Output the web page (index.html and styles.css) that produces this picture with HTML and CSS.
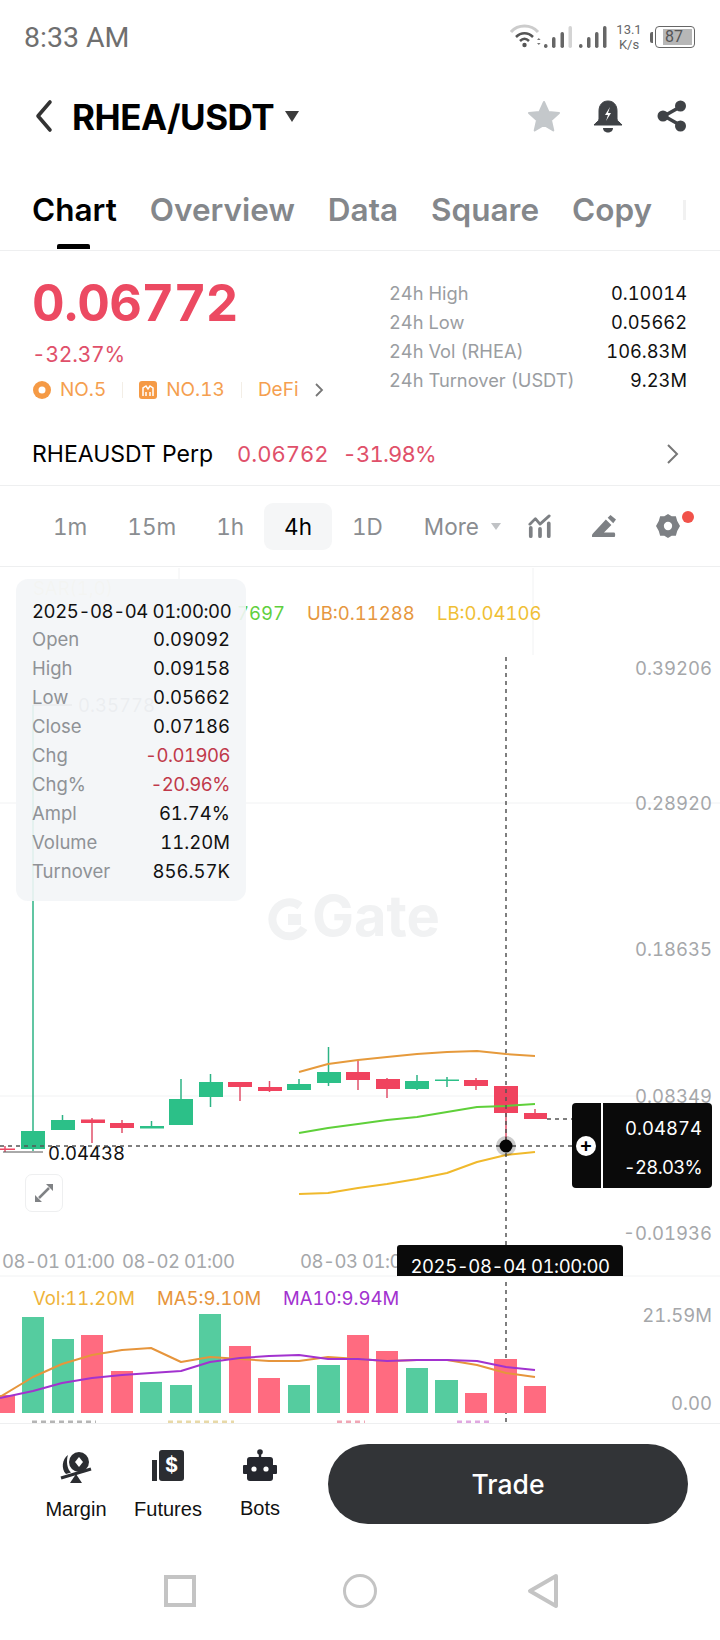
FILE: index.html
```html
<!DOCTYPE html>
<html lang="en">
<head>
<meta charset="utf-8">
<title>RHEA/USDT</title>
<link rel="stylesheet" href="styles.css">
</head>
<body>
<div class="app">
  <div class="status">
    <span class="time">8:33 AM</span>
    <div class="status-right">
      <svg class="sig" width="104" height="26" viewBox="0 0 104 26">
        <path d="M1 8C8 0 21 0 28 8" class="wf1"/>
        <path d="M6 13C11 8 18 8 23 13" class="wf2"/>
        <path d="M10 17C13 14 16 14 19 17" class="wf2"/>
        <circle cx="14.500" cy="21" r="2.200" fill="#555"/>
        <path d="M27 16l1.800-2 1.800 2zM27 19l1.800 2 1.800-2z" fill="#777"/>
        <rect x="34" y="20" width="3.500" height="4" rx="1.700" fill="#666"/>
        <rect x="42" y="13" width="3.500" height="11" rx="1.700" fill="#666"/>
        <rect x="50.500" y="8" width="3.500" height="16" rx="1.700" fill="#666"/>
        <rect x="58.500" y="2" width="3.500" height="22" rx="1.700" fill="#d4d4d4"/>
        <rect x="69" y="20" width="3.500" height="4" rx="1.700" fill="#666"/>
        <rect x="77" y="13" width="3.500" height="11" rx="1.700" fill="#666"/>
        <rect x="85" y="8" width="3.500" height="16" rx="1.700" fill="#666"/>
        <rect x="93" y="2" width="3.500" height="22" rx="1.700" fill="#666"/>
      </svg>
      <div class="speed"><span>13.1</span><span>K/s</span></div>
      <div class="battery"><span class="nub"></span><div class="cell"><span class="level">87</span></div></div>
    </div>
  </div>

  <div class="head">
    <svg class="back" width="18" height="34" viewBox="0 0 18 34"><path d="M15 3L3 17l12 14" fill="none" stroke="#333" stroke-width="3.600" stroke-linecap="round" stroke-linejoin="round"/></svg>
    <span class="title">RHEA/USDT</span>
    <span class="caret"></span>
    <div class="head-icons">
      <svg class="star" width="36" height="34" viewBox="0 0 36 34"><path d="M18 3l4.500 10 10.500 1-8 7.200 2.300 10.300L18 26l-9.300 5.500L11 21.200 3 14l10.500-1z" fill="#c4c8cb" stroke="#c4c8cb" stroke-width="2" stroke-linejoin="round"/></svg>
      <svg width="32" height="34" viewBox="0 0 32 34"><path d="M16 2c-6 0-9 4.500-9 10v8c0 2-3 3.500-5 6h28c-2-2.500-5-4-5-6v-8c0-5.500-3-10-9-10z" fill="#3f4246" stroke="#3f4246" stroke-linejoin="round"/><path d="M11 29h10c0 6-10 6-10 0z" fill="#3f4246"/><path d="M18 8l-5 8h3l-2 6 5-8h-3z" fill="#fff"/></svg>
      <svg width="32" height="34" viewBox="0 0 32 34"><path d="M24 8L8 17l16 9" fill="none" stroke="#3f4246" stroke-width="3.500"/><circle cx="24.500" cy="7" r="5.500" fill="#3f4246"/><circle cx="7" cy="17" r="5.500" fill="#3f4246"/><circle cx="24.500" cy="27" r="5.500" fill="#3f4246"/></svg>
    </div>
  </div>

  <div class="tabs">
    <span class="tab on">Chart</span>
    <span class="tab">Overview</span>
    <span class="tab">Data</span>
    <span class="tab">Square</span>
    <span class="tab">Copy</span>
    <span class="tab-fade"></span>
  </div>

  <div class="stats">
    <div class="stats-left">
      <div class="price">0.06772</div>
      <div class="pct">-32.37%</div>
      <div class="tags">
        <svg width="18" height="18" viewBox="0 0 18 18"><circle cx="9" cy="9" r="9" fill="#f59a45"/><circle cx="9" cy="9" r="3.500" fill="#fff"/></svg>
        <span class="tag t1">NO.5</span>
        <i class="sep"></i>
        <svg width="18" height="18" viewBox="0 0 18 18"><rect width="18" height="18" rx="3" fill="#f59a45"/><path d="M4 15V7l3-2 2 3 2-3 3 2v8M7 15v-4M11 15v-4" fill="none" stroke="#fff" stroke-width="1.500"/></svg>
        <span class="tag t2">NO.13</span>
        <i class="sep"></i>
        <span class="tag t3">DeFi</span>
        <svg class="tag-chev" width="10" height="16" viewBox="0 0 10 16"><path d="M2 2l6 6-6 6" fill="none" stroke="#777" stroke-width="1.800"/></svg>
      </div>
    </div>
    <div class="stats-right">
      <div class="srow"><span>24h High</span><b>0.10014</b></div>
      <div class="srow"><span>24h Low</span><b>0.05662</b></div>
      <div class="srow"><span>24h Vol (RHEA)</span><b>106.83M</b></div>
      <div class="srow"><span>24h Turnover (USDT)</span><b>9.23M</b></div>
    </div>
  </div>

  <div class="perp">
    <span class="perp-name">RHEAUSDT Perp</span>
    <span class="perp-price">0.06762</span>
    <span class="perp-pct">-31.98%</span>
    <svg class="perp-chev" width="14" height="22" viewBox="0 0 14 22"><path d="M2 2l9 9-9 9" fill="none" stroke="#777" stroke-width="2"/></svg>
  </div>

  <div class="frames">
    <span class="fr">1m</span>
    <span class="fr">15m</span>
    <span class="fr">1h</span>
    <span class="fr on">4h</span>
    <span class="fr">1D</span>
    <span class="fr more">More</span>
    <span class="more-caret"></span>
    <div class="fr-icons">
      <svg width="24" height="24" viewBox="0 0 26 26"><path d="M2 11l6-6 5 6 10-9" fill="none" stroke="#7d8084" stroke-width="3" stroke-linejoin="round" stroke-linecap="round"/><path d="M3 15v9M13 16v8M22.500 10v14" stroke="#7d8084" stroke-width="4" stroke-linecap="round"/></svg>
      <svg width="24" height="24" viewBox="0 0 26 26"><path d="M0 24c0-1 0-2 1-3L15 6l6 6-8 8h11c1.500 0 1.500 5 0 5H1c-1 0-1-.5-1-1zM17 4l3-3 6 5-3 4z" fill="#7d8084"/></svg>
      <div class="gear">
        <svg width="24" height="24" viewBox="0 0 26 26"><path d="M13 0l4 2.500 4.500 0 1.500 5 3 5.500-3 5.500-1.500 5-4.500 0-4 2.500-4-2.500-4.500 0-1.500-5-3-5.500 3-5.500 1.500-5 4.500 0z" fill="#7d8084"/><circle cx="13" cy="13" r="4.500" fill="#fff"/></svg>
        <span class="dot"></span>
      </div>
    </div>
  </div>

  <div class="chart">
    <svg class="plot" width="720" height="857" viewBox="0 567 720 857">
      <g class="grid">
        <line x1="0" y1="803" x2="720" y2="803"/>
        <line x1="0" y1="1096" x2="636" y2="1096"/>
        <line x1="533" y1="568" x2="533" y2="655"/>
        <line x1="179" y1="568" x2="179" y2="592"/>
        <line x1="0" y1="1276" x2="720" y2="1276"/>
      </g>

      <g class="wm">
        <path d="M300 906a17 17 0 1 0 4 22" fill="none" stroke="#f1f2f3" stroke-width="8"/>
        <rect x="288" y="914" width="13" height="11" fill="#f1f2f3"/>
        <text x="312" y="936">Gate</text>
      </g>

      <text class="lg sar" x="33" y="595">SAR(1,0)</text>
      <text class="lg" x="285" y="620" text-anchor="end" fill="#5fcf3d">7697</text>
      <text class="lg" x="307" y="620" fill="#e6973e">UB:0.11288</text>
      <text class="lg" x="437" y="620" fill="#f0bf35">LB:0.04106</text>

      <g class="ax">
        <text x="712" y="675">0.39206</text>
        <text x="712" y="810">0.28920</text>
        <text x="712" y="956">0.18635</text>
        <text x="712" y="1103">0.08349</text>
        <text x="712" y="1240">-0.01936</text>
      </g>

      <text class="ax-x" x="2" y="1268">08-01 01:00</text>
      <text class="ax-x" x="122" y="1268">08-02 01:00</text>
      <text class="ax-x" x="300" y="1268">08-03 01:00</text>

      <text class="lbl" x="78" y="712" fill="#a5a7aa">0.35778</text>
      <line x1="33" y1="705" x2="72" y2="705" stroke="#555" stroke-width="1"/>

      <g class="cg">
        <line x1="33" y1="705" x2="33" y2="1151"/><rect x="21" y="1131" width="24" height="18"/>
        <line x1="62.500" y1="1115" x2="62.500" y2="1120"/><rect x="51" y="1120" width="24" height="10"/>
        <line x1="151.500" y1="1121" x2="151.500" y2="1126"/><rect x="140" y="1126" width="24" height="2.500"/>
        <line x1="181" y1="1079" x2="181" y2="1125"/><rect x="169" y="1099" width="24" height="26"/>
        <line x1="210.500" y1="1074" x2="210.500" y2="1107"/><rect x="199" y="1082" width="24" height="15"/>
        <line x1="299" y1="1079" x2="299" y2="1084"/><rect x="287" y="1084" width="24" height="6"/>
        <line x1="328.500" y1="1047" x2="328.500" y2="1086"/><rect x="317" y="1072" width="24" height="11"/>
        <line x1="417" y1="1075" x2="417" y2="1090"/><rect x="405" y="1081" width="24" height="8"/>
        <line x1="447" y1="1077" x2="447" y2="1087"/><rect x="435" y="1079.500" width="24" height="1.500"/>
      </g>
      <g class="cr">
        <rect x="0" y="1148.500" width="15" height="1.500"/><line x1="5" y1="1146" x2="5" y2="1152"/>
        <line x1="92" y1="1118" x2="92" y2="1143"/><rect x="81" y="1119.500" width="24" height="3.500"/>
        <line x1="122" y1="1120" x2="122" y2="1133"/><rect x="110" y="1123" width="24" height="5"/>
        <line x1="240" y1="1082" x2="240" y2="1101"/><rect x="228" y="1082" width="24" height="5"/>
        <line x1="269.500" y1="1081" x2="269.500" y2="1092"/><rect x="258" y="1087" width="24" height="4"/>
        <line x1="358" y1="1060" x2="358" y2="1090"/><rect x="346" y="1072" width="24" height="8"/>
        <line x1="387" y1="1078" x2="387" y2="1098"/><rect x="376" y="1079" width="24" height="10"/>
        <line x1="476" y1="1078" x2="476" y2="1090"/><rect x="464" y="1080" width="24" height="6"/>
        <line x1="506" y1="1086" x2="506" y2="1150"/><rect x="494" y="1086" width="24" height="27"/>
        <line x1="535" y1="1109" x2="535" y2="1119"/><rect x="524" y="1113" width="23" height="6"/>
      </g>

      <polyline class="band" stroke="#e69a3c" points="299,1072 328,1064 358,1060 387,1057 417,1054 447,1052 477,1051 506,1054 535,1056"/>
      <polyline class="band" stroke="#5fd03a" points="299,1133 328,1128 358,1124 387,1120 417,1117 447,1112 477,1107 506,1106 535,1104"/>
      <polyline class="band" stroke="#f0b92c" points="299,1194 328,1193 358,1188 387,1184 417,1179 447,1173 477,1162 506,1155 535,1152"/>

      <line x1="3" y1="1152" x2="43" y2="1152" stroke="#555" stroke-width="1"/>
      <text class="lbl dark" x="48" y="1160">0.04438</text>

      <line class="dash" x1="0" y1="1146" x2="572" y2="1146"/>
      <line class="dash" x1="547" y1="1119" x2="572" y2="1119"/>
      <line class="dash" x1="506" y1="657" x2="506" y2="1245"/>
      <line class="dash" x1="506" y1="1282" x2="506" y2="1424"/>
      <circle cx="506" cy="1146" r="10" fill="#000" fill-opacity=".2"/>
      <circle cx="506" cy="1146" r="6.500" fill="#050505"/>

      <text class="lg" x="33" y="1305" fill="#eeb33a">Vol:11.20M</text>
      <text class="lg" x="157" y="1305" fill="#e6953c">MA5:9.10M</text>
      <text class="lg" x="283" y="1305" fill="#a232cf">MA10:9.94M</text>
      <g class="ax">
        <text x="712" y="1322">21.59M</text>
        <text x="712" y="1410">0.00</text>
      </g>

      <g fill="#55cc9f">
        <rect x="22" y="1317" width="22" height="96"/>
        <rect x="52" y="1339" width="22" height="74"/>
        <rect x="140" y="1382" width="22" height="31"/>
        <rect x="170" y="1385" width="22" height="28"/>
        <rect x="199" y="1314" width="22" height="99"/>
        <rect x="288" y="1385" width="22" height="28"/>
        <rect x="317" y="1365" width="23" height="48"/>
        <rect x="406" y="1368" width="22" height="45"/>
        <rect x="435" y="1380" width="23" height="33"/>
      </g>
      <g fill="#ff6b80">
        <rect x="0" y="1395" width="15" height="18"/>
        <rect x="81" y="1335" width="22" height="78"/>
        <rect x="111" y="1371" width="22" height="42"/>
        <rect x="229" y="1346" width="22" height="67"/>
        <rect x="258" y="1378" width="22" height="35"/>
        <rect x="347" y="1335" width="22" height="78"/>
        <rect x="376" y="1351" width="22" height="62"/>
        <rect x="465" y="1393" width="22" height="20"/>
        <rect x="494" y="1359" width="23" height="54"/>
        <rect x="524" y="1386" width="22" height="27"/>
      </g>
      <polyline class="band" stroke="#e6953c" points="0,1397 33,1377 62,1364 92,1355 122,1350 151,1348 181,1362 210,1357 240,1359 269,1361 299,1361 328,1357 358,1359 387,1361 417,1360 447,1360 477,1365 506,1373 535,1377"/>
      <polyline class="band" stroke="#a232cf" points="0,1398 33,1391 62,1383 92,1378 122,1375 151,1373 181,1371 210,1362 240,1358 269,1356 299,1355 328,1359 358,1359 387,1361 417,1360 447,1360 477,1361 506,1367 535,1370"/>

      <g class="frag">
        <line x1="32" y1="1422" x2="96" y2="1422" stroke="#b5b5b5"/>
        <line x1="168" y1="1422" x2="234" y2="1422" stroke="#e8d9a8"/>
        <line x1="337" y1="1422" x2="365" y2="1422" stroke="#f0a6b5"/>
        <line x1="457" y1="1422" x2="490" y2="1422" stroke="#e0a8e0"/>
      </g>
    </svg>

    <div class="tip">
      <div class="tip-date">2025-08-04 01:00:00</div>
      <div class="trow"><span>Open</span><b>0.09092</b></div>
      <div class="trow"><span>High</span><b>0.09158</b></div>
      <div class="trow"><span>Low</span><b>0.05662</b></div>
      <div class="trow"><span>Close</span><b>0.07186</b></div>
      <div class="trow"><span>Chg</span><b class="neg">-0.01906</b></div>
      <div class="trow"><span>Chg%</span><b class="neg">-20.96%</b></div>
      <div class="trow"><span>Ampl</span><b>61.74%</b></div>
      <div class="trow"><span>Volume</span><b>11.20M</b></div>
      <div class="trow"><span>Turnover</span><b>856.57K</b></div>
    </div>

    <div class="expand">
      <svg width="20" height="20" viewBox="0 0 20 20"><path d="M12 1h7v7zM1 12v7h7z" fill="#808285"/><path d="M15 5L5 15" stroke="#808285" stroke-width="2.500"/></svg>
    </div>

    <div class="plabel">
      <div class="plus-cell"><span class="plus">+</span></div>
      <div class="pvals"><span>0.04874</span><span class="pneg">-28.03%</span></div>
    </div>

    <div class="dlabel">2025-08-04 01:00:00</div>
  </div>

  <div class="bar">
    <div class="bar-item">
      <svg width="36" height="36" viewBox="0 0 36 36"><path d="M10 6c-6 4-7 14-2 19l5-1.500C9 20 8 12 10 6z" fill="#2b2d31"/><circle cx="21" cy="13" r="10" fill="#2b2d31"/><path d="M21 8l4 5-4 5-4-5z" fill="#fff"/><path d="M3 29l30-9" stroke="#2b2d31" stroke-width="3"/><path d="M18 25l6 9H12z" fill="#2b2d31"/></svg>
      <span>Margin</span>
    </div>
    <div class="bar-item">
      <svg width="36" height="36" viewBox="0 0 36 36"><rect x="2" y="11" width="5" height="21" fill="#2b2d31"/><rect x="9" y="1" width="25" height="31" rx="3" fill="#2b2d31"/><text class="dollar" x="21.500" y="23">$</text></svg>
      <span>Futures</span>
    </div>
    <div class="bar-item bots">
      <svg width="36" height="36" viewBox="0 0 36 36"><circle cx="18" cy="3" r="2.800" fill="#25272e"/><rect x="16.800" y="3" width="2.400" height="6" fill="#25272e"/><rect x="5" y="8" width="26" height="24" rx="3" fill="#25272e"/><rect x="1" y="16" width="5" height="9" rx="1" fill="#25272e"/><rect x="30" y="16" width="5" height="9" rx="1" fill="#25272e"/><circle cx="12" cy="20" r="2.600" fill="#fff"/><circle cx="24" cy="20" r="2.600" fill="#fff"/></svg>
      <span>Bots</span>
    </div>
    <div class="trade">Trade</div>
  </div>

  <div class="nav">
    <span class="n-square"></span>
    <span class="n-circle"></span>
    <svg width="32" height="36" viewBox="0 0 32 36"><path d="M29 3L3 18l26 15z" fill="none" stroke="#c4c4c4" stroke-width="4" stroke-linejoin="round"/></svg>
  </div>
</div>
</body>
</html>
```
FILE: styles.css
```css
* { box-sizing: border-box; }
html, body { margin: 0; padding: 0; background: #fff; }
body { font-family: Inter, "Liberation Sans", sans-serif; color: #000; font-variant-numeric: tabular-nums; }
.app { width: 720px; height: 1640px; overflow: hidden; display: flex; flex-direction: column; }

.status { height: 74px; flex: none; display: flex; align-items: center; justify-content: space-between; padding: 0 25px 0 24px; }
.time { font-family: Roboto, sans-serif; font-size: 28.500px; color: #6f6f6f; }
.status-right { display: flex; align-items: center; }
.sig { margin-right: 3px; }
.wf1 { fill: none; stroke: #ccc; stroke-width: 3; }
.wf2 { fill: none; stroke: #555; stroke-width: 2.500; }
.speed { display: flex; flex-direction: column; align-items: center; font-family: Roboto, sans-serif; font-size: 13px; line-height: 15px; color: #666; width: 24px; margin-right: 9px; }
.battery { display: flex; align-items: center; gap: 2px; }
.nub { width: 3px; height: 11px; background: #666; border-radius: 2px 0 0 2px; }
.cell { width: 40px; height: 22px; border: 1.500px solid #666; border-radius: 4px; padding: 2px 2.500px 2px 7px; display: flex; }
.level { flex: 1; background: #b7b7b7; font-family: Roboto, sans-serif; font-size: 16px; line-height: 15px; color: #555; padding-left: 2px; }

.head { height: 84px; flex: none; display: flex; align-items: center; padding: 0 32px 0 35px; }
.back { flex: none; }
.title { font-size: 35px; font-weight: 700; margin-left: 19px; letter-spacing: -.5px; line-height: 40px; margin-top: 2px; }
.caret { width: 0; height: 0; border-left: 7.500px solid transparent; border-right: 7.500px solid transparent; border-top: 11px solid #3c3c3c; margin-left: 11px; }
.head-icons { margin-left: auto; display: flex; align-items: center; gap: 32px; }
.star { margin-right: -2px; }

.tabs { height: 93px; flex: none; border-bottom: 1px solid #eeeff0; display: flex; gap: 33px; padding: 0 0 0 32px; position: relative; align-items: flex-start; }
.tab { font-size: 31.500px; font-weight: 600; color: #84878b; line-height: 40px; margin-top: 32px; }
.tab.on { color: #000; position: relative; }
.tab.on::after { content: ""; position: absolute; left: 25px; width: 33px; top: 54px; height: 5px; background: #000; border-radius: 2px 2px 0 0; }
.tab-fade { width: 3px; height: 20px; background: #f1f1f1; position: absolute; left: 683px; top: 42px; }

.stats { height: 172px; flex: none; display: flex; padding: 0 33px 0 32px; }
.stats-left { width: 357px; flex: none; padding-top: 26px; }
.price { font-size: 50.500px; font-weight: 700; color: #ec4a62; line-height: 52px; letter-spacing: -.5px; }
.pct { font-size: 21px; color: #e0506a; line-height: 26px; margin-top: 13px; letter-spacing: -.2px; }
.tags { display: flex; align-items: center; height: 24px; margin-top: 10px; font-size: 19px; color: #f59f50; padding-left: 1px; }
.tag { line-height: 24px; }
.t1 { margin-left: 9px; }
.t2 { margin-left: 9px; }
.sep { width: 1px; height: 16px; background: #f3eee6; margin: 0 16px; }
.tag-chev { margin-left: 16px; }
.stats-right { flex: 1; padding-top: 28px; }
.srow { display: flex; justify-content: space-between; font-size: 18.300px; line-height: 29px; height: 29px; }
.srow span { color: #9a9da1; }
.srow b { font-weight: 400; color: #111; }

.perp { height: 62px; flex: none; display: flex; align-items: center; padding: 0 40px 0 32px; font-size: 23px; }
.perp-price { color: #e0506a; margin-left: 24px; font-size: 22px; }
.perp-pct { color: #e0506a; margin-left: 14px; font-size: 22px; letter-spacing: -.8px; }
.perp-chev { margin-left: auto; }

.frames { height: 82px; flex: none; border-top: 1px solid #eeeff0; border-bottom: 1px solid #eeeff0; display: flex; align-items: center; padding: 0 40px 0 33px; font-size: 22.500px; color: #8a8d91; }
.fr { padding: 0 20px; line-height: 47px; border-radius: 9px; }
.fr.on { background: #f5f6f7; color: #000; }
.fr.more { padding: 0; margin-left: 21px; }
.more-caret { width: 0; height: 0; border-left: 5.500px solid transparent; border-right: 5.500px solid transparent; border-top: 7px solid #c0c2c5; margin-left: 12px; }
.fr-icons { margin-left: auto; display: flex; align-items: center; gap: 40px; }
.fr-icons svg { display: block; }
.gear { position: relative; }
.dot { position: absolute; left: 26px; top: -3px; width: 12px; height: 12px; border-radius: 50%; background: #f1524a; }

.chart { height: 857px; flex: none; position: relative; border-bottom: 1px solid #eeeff0; overflow: hidden; }
.plot { display: block; }
.plot text { font-family: Inter, sans-serif; font-variant-numeric: tabular-nums; }
.grid line { stroke: #f1f2f3; stroke-width: 1; }
.wm text { font-size: 56px; font-weight: 700; fill: #f1f2f3; }
.lg { font-size: 18.500px; }
.sar { fill: #e8d88a; fill-opacity: .5; }
.lbl { font-size: 18.500px; }
.lbl.dark { fill: #111; }
.ax text { font-size: 18.500px; fill: #a5a7aa; text-anchor: end; }
.ax-x { font-size: 18.500px; fill: #a5a7aa; letter-spacing: -.5px; }
.cg { fill: #2cc088; stroke: none; }
.cg line { stroke: #2cb384; stroke-width: 1.500; }
.cr { fill: #f0435f; stroke: none; }
.cr line { stroke: #e0506a; stroke-width: 1.500; }
.band { fill: none; stroke-width: 2; stroke-linejoin: round; }
.dash { stroke: #555; stroke-width: 1.500; stroke-dasharray: 4 4; }
.frag line { stroke-width: 3; stroke-dasharray: 5 4; }

.tip { position: absolute; left: 16px; top: 12px; width: 230px; height: 322px; background: rgba(243, 245, 247, .9); border-radius: 12px; padding: 18px 16px; font-size: 18.500px; }
.tip-date { line-height: 29px; height: 28px; color: #111; white-space: nowrap; letter-spacing: -.4px; }
.trow { display: flex; justify-content: space-between; line-height: 29px; height: 29px; }
.trow span { color: #8f9296; }
.trow b { font-weight: 400; color: #111; }
.trow b.neg { color: #c0394a; letter-spacing: -.5px; }

.expand { position: absolute; left: 25px; top: 607px; width: 38px; height: 38px; border: 1.500px solid #eeeff0; border-radius: 7px; display: flex; align-items: center; justify-content: center; background: #fff; }
.expand svg { display: block; }

.plabel { position: absolute; left: 572px; top: 536px; width: 140px; height: 85px; background: #0a0a0a; border-radius: 4px; display: flex; }
.plus-cell { width: 31px; flex: none; border-right: 2px solid #fff; display: flex; align-items: center; justify-content: center; }
.plus { width: 20px; height: 20px; border-radius: 50%; background: #fff; color: #000; font-size: 20px; font-weight: 600; line-height: 19px; text-align: center; margin-left: -1px; }
.pvals { flex: 1; display: flex; flex-direction: column; align-items: flex-end; justify-content: space-between; padding: 12px 10px 8px 0; color: #fff; font-size: 18.500px; line-height: 26px; }
.pneg { letter-spacing: -.7px; }

.dlabel { position: absolute; left: 397px; top: 678px; width: 226px; height: 31px; background: #0a0a0a; color: #fff; font-size: 18.500px; line-height: 20px; padding-top: 11px; text-align: center; overflow: hidden; border-radius: 3px 3px 0 0; letter-spacing: -.4px; }

.bar { height: 116px; flex: none; display: flex; padding: 0 32px 0 30px; align-items: flex-start; position: relative; }
.bar-item { width: 92px; flex: none; display: flex; flex-direction: column; align-items: center; padding-top: 25px; font-family: "Liberation Sans", sans-serif; font-size: 20px; color: #111; }
.bar-item svg { display: block; }
.bar-item span { line-height: 22px; margin-top: 13px; }
.bar-item.bots span { margin-top: 12px; }
.dollar { font-family: Inter, sans-serif; font-size: 20px; font-weight: 700; fill: #fff; text-anchor: middle; }
.trade { margin-left: auto; width: 360px; height: 80px; margin-top: 20px; border-radius: 40px; background: #323437; color: #fff; font-size: 26.500px; font-weight: 500; line-height: 80px; text-align: center; }

.nav { flex: 1; position: relative; display: flex; align-items: flex-start; padding: 35px 0 0 164px; }
.n-square { width: 32px; height: 32px; border: 4px solid #c4c4c4; flex: none; }
.n-circle { width: 34px; height: 34px; border: 3.500px solid #c4c4c4; border-radius: 50%; margin-left: 147px; flex: none; margin-top: -1px; }
.nav svg { margin-left: 150px; margin-top: -2px; flex: none; }
```
